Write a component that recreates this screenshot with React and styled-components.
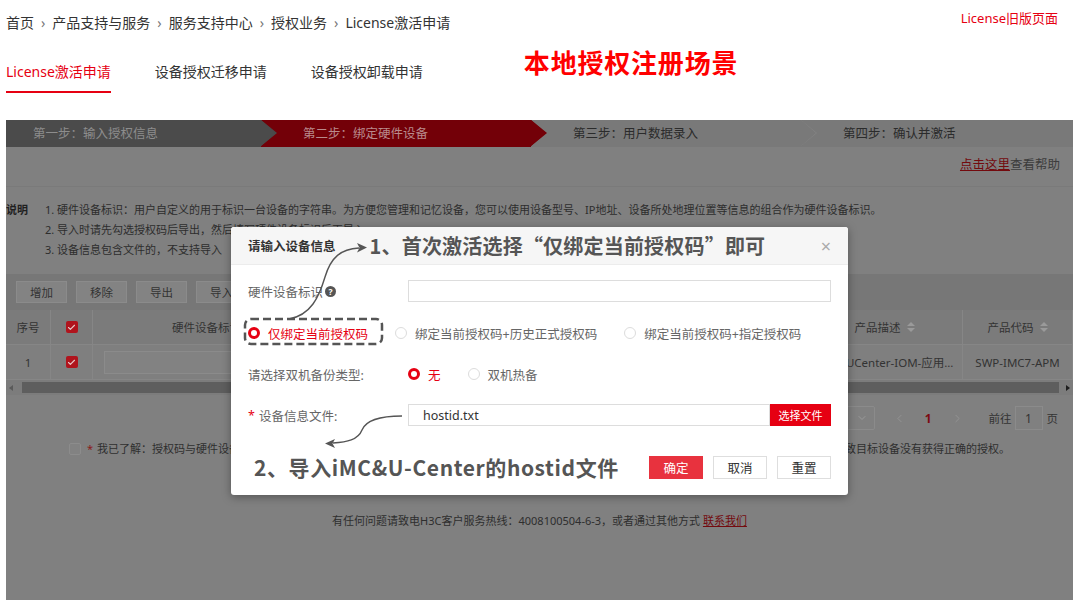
import React from 'react'
import styled, { createGlobalStyle } from 'styled-components'
import { Check, ChevronDown, ChevronLeft, ChevronRight } from 'lucide-react'

const GlobalStyle = createGlobalStyle`
  * { box-sizing: border-box; }
  body {
    margin: 0;
    background: #fff;
    color: #333;
    font-family: "Noto Sans", "Noto Sans CJK SC", sans-serif;
  }
`

const Page = styled.div`
  width: 1080px;
  height: 600px;
  overflow: hidden;
  padding: 0 7px 0 6px;
`

const TopBar = styled.div`
  display: flex;
  justify-content: space-between;
  align-items: flex-start;
  padding-top: 8px;
`

const Crumbs = styled.div`
  display: flex;
  padding-top: 5px;
  font-size: 14px;
  line-height: 20px;
  color: #333;
`

const Sep = styled.span`
  margin: 0 7px;
  color: #777;
`

const OldLink = styled.a`
  margin-right: 15px;
  font-size: 13px;
  line-height: 20px;
  color: #e60012;
  text-decoration: none;
`

const TabRow = styled.div`
  display: flex;
  align-items: flex-start;
  gap: 44px;
  margin-top: 29px;
`

const Tab = styled.div`
  padding-bottom: 9px;
  font-size: 14px;
  line-height: 20px;
  color: ${p => (p.$active ? '#e60012' : '#333')};
  border-bottom: 2px solid ${p => (p.$active ? '#e60012' : 'transparent')};
`

const SceneTitle = styled.div`
  margin: -15px 0 0 57px;
  font-family: "Noto Sans CJK SC", sans-serif;
  font-size: 26px;
  font-weight: 700;
  line-height: 30px;
  letter-spacing: 0.8px;
  color: #ff0000;
`

const Screen = styled.div`
  position: relative;
  height: 480px;
  margin-top: 27px;
  overflow: hidden;
  background: #808080;
  font-family: "Noto Sans", "Noto Sans CJK SC", sans-serif;
`

const stepBg = { done: '#4b4b4b', current: '#730008', todo: '#797979' }
const stepFg = { done: '#8d8d8d', current: '#b98a8c', todo: '#2b2b2b' }

const Steps = styled.div`
  display: flex;
  height: 27px;
`

const Step = styled.div`
  position: relative;
  flex: ${p => (p.$last ? '1' : `0 0 ${p.$first ? 255 : 270}px`)};
  padding-left: ${p => (p.$first ? 27 : 42)}px;
  background: ${p => stepBg[p.$state]};
  color: ${p => stepFg[p.$state]};
  font-size: 12.5px;
  line-height: 27px;

  &::before,
  &::after {
    content: '';
    display: ${p => (p.$last ? 'none' : 'block')};
    position: absolute;
    top: 0;
    z-index: 2;
    border-top: 13.5px solid transparent;
    border-bottom: 13.5px solid transparent;
  }
  &::before {
    right: -16px;
    border-left: 16px solid ${p => (p.$state === 'todo' ? '#868686' : stepBg[p.$state])};
  }
  &::after {
    right: -15px;
    border-left: 15px solid ${p => stepBg[p.$state]};
  }
`

const HelpRow = styled.div`
  display: flex;
  justify-content: flex-end;
  height: 40px;
  padding: 9px 13px 0;
  border-bottom: 1px solid #7a7a7a;
  font-size: 12.5px;
  line-height: 18px;
  color: #3c3c3c;
`

const HelpLink = styled.a`
  color: #730a0e;
  text-decoration: underline;
`

const Notes = styled.div`
  display: grid;
  grid-template-columns: 39px 1fr;
  padding-top: 13px;
  font-size: 11px;
  line-height: 20px;
  color: #2d2d2d;

  b {
    color: #1f1f1f;
  }
`

const Toolbar = styled.div`
  display: flex;
  gap: 9px;
  margin-top: 14px;
  padding: 7px 10px;
  background: #777;
`

const ToolButton = styled.div`
  display: flex;
  align-items: center;
  justify-content: center;
  width: 51px;
  height: 22px;
  border: 1px solid #8b8b8b;
  background: #838383;
  font-size: 11.5px;
  color: #333;
`

const Table = styled.div`
  display: grid;
  grid-template-columns: 45px 42px 228px 243px 243px 156px 1fr;
`

const Cell = styled.div`
  display: flex;
  align-items: center;
  justify-content: center;
  height: 35px;
  padding: 0 8px;
  overflow: hidden;
  white-space: nowrap;
  background: ${p => (p.$head ? '#7b7b7b' : '#7f7f7f')};
  border-right: 1px solid #868686;
  border-bottom: 1px solid #868686;
  font-size: 11.5px;
  color: #333;
`

const Ellipsis = styled.span`
  overflow: hidden;
  text-overflow: ellipsis;
`

const CellInput = styled.div`
  flex: 1;
  height: 23px;
  margin: 0 3px;
  border: 1px solid #8b8b8b;
  background: #828282;
`

const SortIcon = styled.span`
  display: inline-flex;
  flex-direction: column;
  gap: 2px;
  margin-left: 6px;

  &::before,
  &::after {
    content: '';
    border-left: 4px solid transparent;
    border-right: 4px solid transparent;
  }
  &::before { border-bottom: 4px solid #9a9a9a; }
  &::after { border-top: 4px solid #9a9a9a; }
`

const CheckBox = styled.span`
  display: inline-flex;
  align-items: center;
  justify-content: center;
  width: 12px;
  height: 12px;
  border-radius: 2px;
  background: #b0141d;
  color: #e8c8c8;
`

const Scrollbar = styled.div`
  display: flex;
  align-items: center;
  height: 15px;
  padding: 0 3px;
  background: #7c7c7c;
`

const ScrollArrow = styled.span`
  width: 0;
  height: 0;
  border-top: 3px solid transparent;
  border-bottom: 3px solid transparent;
  ${p => (p.$right ? 'border-left: 4px solid #1e1e1e;' : 'border-right: 4px solid #5a5a5a;')}
`

const Thumb = styled.div`
  flex: 1;
  height: 11px;
  margin: 0 7px 0 9px;
  background: #5e5e5e;
`

const Pager = styled.div`
  display: flex;
  align-items: center;
  justify-content: flex-end;
  height: 24px;
  margin-top: 11px;
  padding-right: 15px;
  font-size: 11.5px;
  color: #333;
`

const PageSelect = styled.div`
  display: flex;
  align-items: center;
  justify-content: flex-end;
  width: 100px;
  height: 24px;
  padding-right: 6px;
  border: 1px solid #8b8b8b;
  border-radius: 2px;
  color: #9a9a9a;
`

const PagerArrow = styled.span`
  display: flex;
  margin-left: ${p => p.$gap}px;
  color: #969696;
`

const PageNum = styled.span`
  margin-left: 19px;
  font-size: 12px;
  font-weight: 700;
  color: #7d0a10;
`

const GoTo = styled.span`
  margin-left: 25px;
`

const PageInput = styled.div`
  display: flex;
  align-items: center;
  justify-content: center;
  width: 28px;
  height: 24px;
  margin: 0 4px 0 3px;
  border: 1px solid #8b8b8b;
  font-size: 12px;
`

const Agree = styled.div`
  display: flex;
  align-items: center;
  justify-content: center;
  margin-top: 11px;
  font-size: 11px;
  line-height: 16px;
  color: #2f2f2f;
`

const AgreeBox = styled.span`
  width: 12px;
  height: 12px;
  margin-right: 6px;
  border: 1px solid #8c8c8c;
  border-radius: 2px;
  background: #828282;
`

const Star = styled.span`
  margin-right: 4px;
  color: ${p => p.$color || '#e60012'};
`

const Footer = styled.div`
  margin-top: 56px;
  text-align: center;
  font-size: 11px;
  line-height: 16px;
  color: #2e2e2e;

  a {
    color: #730a0e;
    text-decoration: underline;
  }
`

/* modal */

const Modal = styled.div`
  position: absolute;
  left: 225px;
  top: 107px;
  width: 617px;
  height: 268px;
  border-radius: 3px;
  background: #fff;
  box-shadow: 0 2px 10px rgba(0, 0, 0, 0.35);
`

const ModalHead = styled.div`
  display: flex;
  align-items: center;
  height: 38px;
  padding: 0 17px;
  border-radius: 3px 3px 0 0;
  border-bottom: 1px solid #ececec;
  background: #f6f6f6;
`

const ModalTitle = styled.div`
  font-family: "Noto Sans CJK SC", sans-serif;
  font-size: 12.5px;
  font-weight: 700;
  color: #333;
`

const Note = styled.div`
  margin-left: ${p => p.$ml || 0}px;
  font-family: "Noto Sans CJK SC", sans-serif;
  font-size: ${p => p.$size}px;
  font-weight: 700;
  line-height: 1;
  letter-spacing: ${p => p.$ls}px;
  color: #555;
`

const Close = styled.span`
  margin-left: auto;
  font-size: 18px;
  line-height: 1;
  color: #aaa;
`

const ModalBody = styled.div`
  padding: 15px 17px 0;
`

const FormRow = styled.div`
  display: flex;
  align-items: center;
  height: 22px;
  margin-bottom: ${p => p.$mb ?? 19}px;
`

const Label = styled.div`
  display: flex;
  align-items: center;
  flex-shrink: 0;
  width: 160px;
  font-size: 12.5px;
  color: #666;
`

const Help = styled.span`
  display: inline-flex;
  align-items: center;
  justify-content: center;
  width: 11px;
  height: 11px;
  margin-left: 2px;
  border-radius: 50%;
  background: #555;
  color: #fff;
  font-size: 8.5px;
  font-weight: 700;
`

const TextBox = styled.div`
  display: flex;
  align-items: center;
  flex: 1;
  height: 22px;
  padding-left: 14px;
  border: 1px solid #ddd;
  font-size: 12.5px;
  color: #333;
`

const FileButton = styled.div`
  display: flex;
  align-items: center;
  justify-content: center;
  width: 61px;
  height: 22px;
  background: #e60012;
  color: #fff;
  font-size: 11px;
`

const Option = styled.div`
  display: flex;
  align-items: center;
  margin-right: 27px;
  font-size: 12.5px;
  color: ${p => (p.$on ? '#e60012' : '#666')};
`

const Radio = styled.span`
  width: 12px;
  height: 12px;
  margin-right: 8px;
  border-radius: 50%;
  background: #fff;
  border: ${p => (p.$on ? '3.5px solid #e60012' : '1px solid #dcdcdc')};
`

const ModalFoot = styled.div`
  display: flex;
  align-items: center;
  justify-content: space-between;
  margin-top: 30px;
  padding: 0 17px 0 23px;
`

const Buttons = styled.div`
  display: flex;
  gap: 10px;
`

const Button = styled.div`
  display: flex;
  align-items: center;
  justify-content: center;
  width: 54px;
  height: 23px;
  font-size: 12.5px;
  background: ${p => (p.$primary ? '#e8323e' : '#fff')};
  color: ${p => (p.$primary ? '#fff' : '#333')};
  border: 1px solid ${p => (p.$primary ? '#e8323e' : '#dedede')};
`

const Marks = styled.svg`
  position: absolute;
  left: 0;
  top: 0;
  pointer-events: none;
`

const steps = ['第一步：输入授权信息', '第二步：绑定硬件设备', '第三步：用户数据录入', '第四步：确认并激活']
const stepStates = ['done', 'current', 'todo', 'todo']

const notes = [
  '1. 硬件设备标识：用户自定义的用于标识一台设备的字符串。为方便您管理和记忆设备，您可以使用设备型号、IP地址、设备所处地理位置等信息的组合作为硬件设备标识。',
  '2. 导入时请先勾选授权码后导出，然后填写硬件设备标识后再导入。',
  '3. 设备信息包含文件的，不支持导入',
]

const App = () => {
  return (
    <Page>
      <GlobalStyle />
      <TopBar>
        <Crumbs>
          首页<Sep>›</Sep>产品支持与服务<Sep>›</Sep>服务支持中心<Sep>›</Sep>授权业务<Sep>›</Sep>License激活申请
        </Crumbs>
        <OldLink>License旧版页面</OldLink>
      </TopBar>

      <TabRow>
        <Tab $active>License激活申请</Tab>
        <Tab>设备授权迁移申请</Tab>
        <Tab>设备授权卸载申请</Tab>
        <SceneTitle>本地授权注册场景</SceneTitle>
      </TabRow>

      <Screen>
        <Steps>
          {steps.map((s, i) => (
            <Step key={s} $state={stepStates[i]} $first={i === 0} $last={i === steps.length - 1}>
              {s}
            </Step>
          ))}
        </Steps>

        <HelpRow>
          <HelpLink>点击这里</HelpLink>查看帮助
        </HelpRow>

        <Notes>
          <b>说明</b>
          <div>
            {notes.map(n => <div key={n}>{n}</div>)}
          </div>
        </Notes>

        <Toolbar>
          <ToolButton>增加</ToolButton>
          <ToolButton>移除</ToolButton>
          <ToolButton>导出</ToolButton>
          <ToolButton>导入</ToolButton>
        </Toolbar>

        <Table>
          <Cell $head>序号</Cell>
          <Cell $head><CheckBox><Check size={9} strokeWidth={3} /></CheckBox></Cell>
          <Cell $head>硬件设备标识</Cell>
          <Cell $head>授权码</Cell>
          <Cell $head>产品名称</Cell>
          <Cell $head>产品描述<SortIcon /></Cell>
          <Cell $head>产品代码<SortIcon /></Cell>

          <Cell>1</Cell>
          <Cell><CheckBox><Check size={9} strokeWidth={3} /></CheckBox></Cell>
          <Cell><CellInput /></Cell>
          <Cell>LIC-IMC7-APM-1</Cell>
          <Cell>H3C iMC 应用管理</Cell>
          <Cell><Ellipsis>iMC7-UCenter-IOM-应用性能管理组件</Ellipsis></Cell>
          <Cell>SWP-IMC7-APM</Cell>
        </Table>

        <Scrollbar>
          <ScrollArrow />
          <Thumb />
          <ScrollArrow $right />
        </Scrollbar>

        <Pager>
          <PageSelect><ChevronDown size={12} /></PageSelect>
          <PagerArrow $gap={18}><ChevronLeft size={13} strokeWidth={1.5} /></PagerArrow>
          <PageNum>1</PageNum>
          <PagerArrow $gap={19}><ChevronRight size={13} strokeWidth={1.5} /></PagerArrow>
          <GoTo>前往</GoTo>
          <PageInput>1</PageInput>
          <span>页</span>
        </Pager>

        <Agree>
          <AgreeBox />
          <Star $color="#8a1a1a">*</Star>
          我已了解：授权码与硬件设备绑定后不可更改，请您务必仔细核对所填写的硬件设备信息，确保信息真实、准确、无误，由于用户提供的设备信息错误将导致目标设备没有获得正确的授权。
        </Agree>

        <Footer>
          有任何问题请致电H3C客户服务热线：4008100504-6-3，或者通过其他方式 <a>联系我们</a>
        </Footer>

        <Modal>
          <ModalHead>
            <ModalTitle>请输入设备信息</ModalTitle>
            <Note $size={20} $ls={0.2} $ml={34}>1、首次激活选择“仅绑定当前授权码”即可</Note>
            <Close>×</Close>
          </ModalHead>

          <ModalBody>
            <FormRow $mb={20}>
              <Label>硬件设备标识<Help>?</Help></Label>
              <TextBox />
            </FormRow>

            <FormRow>
              <Option $on><Radio $on />仅绑定当前授权码</Option>
              <Option><Radio />绑定当前授权码+历史正式授权码</Option>
              <Option><Radio />绑定当前授权码+指定授权码</Option>
            </FormRow>

            <FormRow>
              <Label>请选择双机备份类型:</Label>
              <Option $on><Radio $on />无</Option>
              <Option><Radio />双机热备</Option>
            </FormRow>

            <FormRow $mb={0}>
              <Label><Star>*</Star>设备信息文件:</Label>
              <TextBox>hostid.txt</TextBox>
              <FileButton>选择文件</FileButton>
            </FormRow>
          </ModalBody>

          <ModalFoot>
            <Note $size={21} $ls={0.6}>2、导入iMC&amp;U-Center的hostid文件</Note>
            <Buttons>
              <Button $primary>确定</Button>
              <Button>取消</Button>
              <Button>重置</Button>
            </Buttons>
          </ModalFoot>

          <Marks width="617" height="268" viewBox="0 0 617 268">
            <rect x="14" y="92" width="137" height="25" rx="6" fill="none" stroke="#555" strokeWidth="2.5" strokeDasharray="8 4" />
            <path d="M58 92 C 80 88, 88 70, 94 50 S 110 22, 128 21" fill="none" stroke="#555" strokeWidth="1.4" />
            <path d="M136 20.5 L126 16 L128.5 20.8 L126 25.5 Z" fill="#555" />
            <path d="M171 189 C 150 189, 135 193, 131 203 S 116 215, 102 216" fill="none" stroke="#555" strokeWidth="1.4" />
            <path d="M94 216.4 L104 212 L101.5 216.5 L104 221 Z" fill="#555" />
          </Marks>
        </Modal>
      </Screen>
    </Page>
  )
}

export default App
